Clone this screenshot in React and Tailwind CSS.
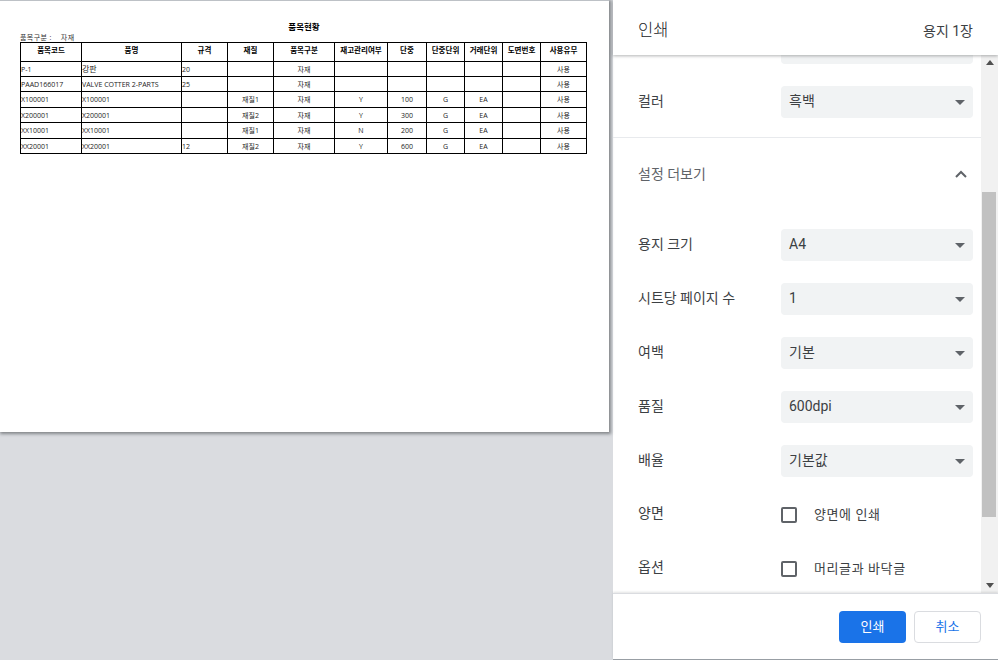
const rows = [
  ["P-1", "강판", "20", "", "자재", "", "", "", "", "", "사용"],
  ["PAAD166017", "VALVE COTTER 2-PARTS", "25", "", "자재", "", "", "", "", "", "사용"],
  ["X100001", "X100001", "", "재질1", "자재", "Y", "100", "G", "EA", "", "사용"],
  ["X200001", "X200001", "", "재질2", "자재", "Y", "300", "G", "EA", "", "사용"],
  ["XX10001", "XX10001", "", "재질1", "자재", "N", "200", "G", "EA", "", "사용"],
  ["XX20001", "XX20001", "12", "재질2", "자재", "Y", "600", "G", "EA", "", "사용"],
];
const heads = ["품목코드", "품명", "규격", "재질", "품목구분", "재고관리여부", "단중", "단중단위", "거래단위", "도면번호", "사용유무"];
const widths = [61, 100, 46, 46, 61, 53, 39, 38, 38, 38, 46];
const heights = [15, 15, 16, 15, 16, 15];

function Caret() {
  return (
    <svg width="10" height="5" viewBox="0 0 10 5" className="shrink-0">
      <path d="M0 0h10L5 5z" fill="#5f6368" />
    </svg>
  );
}

function SelectRow({ label, value }) {
  return (
    <div className="flex items-center h-[32px] mb-[22px]">
      <div className="w-[168px] pl-[25px] pb-[2px] text-[14px] text-[#3c4043]">{label}</div>
      <div className="w-[192px] h-[32px] rounded bg-[#f1f3f4] flex items-center justify-between pl-2 pr-[8px] text-[14px] text-[#3c4043]">
        <span className="pb-[2px]">{value}</span>
        <Caret />
      </div>
    </div>
  );
}

function CheckRow({ label, text }) {
  return (
    <div className="flex items-center h-[32px] mb-[22px]">
      <div className="w-[168px] pl-[25px] text-[14px] text-[#3c4043] pb-[3px]">{label}</div>
      <div className="w-[16px] h-[16px] border-2 border-[#5f6368] rounded-[2px]"></div>
      <div className="ml-[17px] text-[13px] text-[#3c4043] tracking-[0.6px]">{text}</div>
    </div>
  );
}

export default function App() {
  return (
    <div className="w-[998px] h-[660px] flex overflow-hidden bg-white font-['Open_Sans','Noto_Sans_CJK_KR',sans-serif]">
      {/* preview side */}
      <div className="w-[613px] h-full bg-[#dadce0] shrink-0">
        <div className="w-[609px] h-[432px] bg-white border-t border-[#bdc1c6] shadow-[1px_1px_3px_1px_rgba(60,64,67,0.55)] pl-[20px]">
          <div className="h-[28px] pt-[20px] pl-[1px] text-center text-[8.5px] leading-[12px] font-bold text-black w-[567px]">품목현황</div>
          <div className="mt-[4px] h-[9px] flex text-[7px] leading-[9px] text-[#333] tracking-[0.4px]">
            <span>품목구분 :</span>
            <span className="ml-[9px]">자재</span>
          </div>
          <table className="table-fixed border-collapse border-[1.5px] border-black w-[567px] text-[7px] leading-[9px] text-[#222]">
            <colgroup>
              {widths.map((w, i) => (
                <col key={i} style={{ width: w }} />
              ))}
            </colgroup>
            <thead>
              <tr className="h-[19px]">
                {heads.map((h) => (
                  <th key={h} className="border border-black font-bold text-black text-center text-[7.5px] p-0 pb-[3px]">{h}</th>
                ))}
              </tr>
            </thead>
            <tbody>
              {rows.map((r, i) => (
                <tr key={i} style={{ height: heights[i] }}>
                  {r.map((c, j) => (
                    <td key={j} className={j < 3 ? "border border-black p-0 text-left" : "border border-black p-0 text-center"}>
                      {c === "강판" ? <span className="text-[8px]">{c}</span> : c}
                    </td>
                  ))}
                </tr>
              ))}
            </tbody>
          </table>
        </div>
      </div>

      {/* settings side */}
      <div className="flex-1 h-full flex flex-col border-b border-[#9aa0a6] font-['Roboto','Noto_Sans_CJK_KR',sans-serif]">
        <div className="h-[55px] shrink-0 flex items-center justify-between px-[25px] pt-[7px] bg-white shadow-[0_1px_3px_rgba(60,64,67,0.4)] relative z-10">
          <span className="text-[16.5px] font-light text-[#202124]">인쇄</span>
          <span className="text-[14px] text-[#3c4043]">용지 1장</span>
        </div>

        <div className="flex-1 flex overflow-hidden">
          <div className="w-[368px] overflow-hidden">
            <div className="-mt-[23px]">
              <SelectRow label="" value="" />
              <div className="h-[51px]">
                <SelectRow label="컬러" value="흑백" />
              </div>
              <div className="border-t border-[#e8eaed] h-[92px] flex items-start justify-between pl-[25px] pr-[14px] pt-[26px]">
                <span className="text-[14px] text-[#5f6368]">설정 더보기</span>
                <svg width="12" height="8" viewBox="0 0 12 8" className="mt-[6px]">
                  <path d="M1 7l5-5 5 5" fill="none" stroke="#5f6368" strokeWidth="2" />
                </svg>
              </div>
              <SelectRow label="용지 크기" value="A4" />
              <SelectRow label="시트당 페이지 수" value="1" />
              <SelectRow label="여백" value="기본" />
              <SelectRow label="품질" value="600dpi" />
              <SelectRow label="배율" value="기본값" />
              <CheckRow label="양면" text="양면에 인쇄" />
              <CheckRow label="옵션" text="머리글과 바닥글" />
            </div>
          </div>
          {/* scrollbar */}
          <div className="w-[17px] h-full bg-[#f1f1f1] flex flex-col items-center justify-between py-[5px] relative">
            <svg width="8" height="5" viewBox="0 0 8 5"><path d="M0 5L4 0l4 5z" fill="#505050" /></svg>
            <div className="absolute left-[1px] top-[137px] w-[14px] h-[325px] bg-[#c1c1c1]"></div>
            <svg width="8" height="5" viewBox="0 0 8 5"><path d="M0 0h8L4 5z" fill="#505050" /></svg>
          </div>
        </div>

        <div className="h-[66px] shrink-0 flex items-start justify-end pt-[17px] pr-[17px] gap-[8px] bg-white border-t border-[#dadce0] shadow-[0_-1px_2px_rgba(60,64,67,0.15)] relative z-10">
          <button className="w-[67px] h-[32px] rounded bg-[#1a73e8] text-white text-[13px]">인쇄</button>
          <button className="w-[67px] h-[32px] rounded border border-[#dadce0] bg-white text-[#1a73e8] text-[13px]">취소</button>
        </div>
      </div>
    </div>
  );
}
